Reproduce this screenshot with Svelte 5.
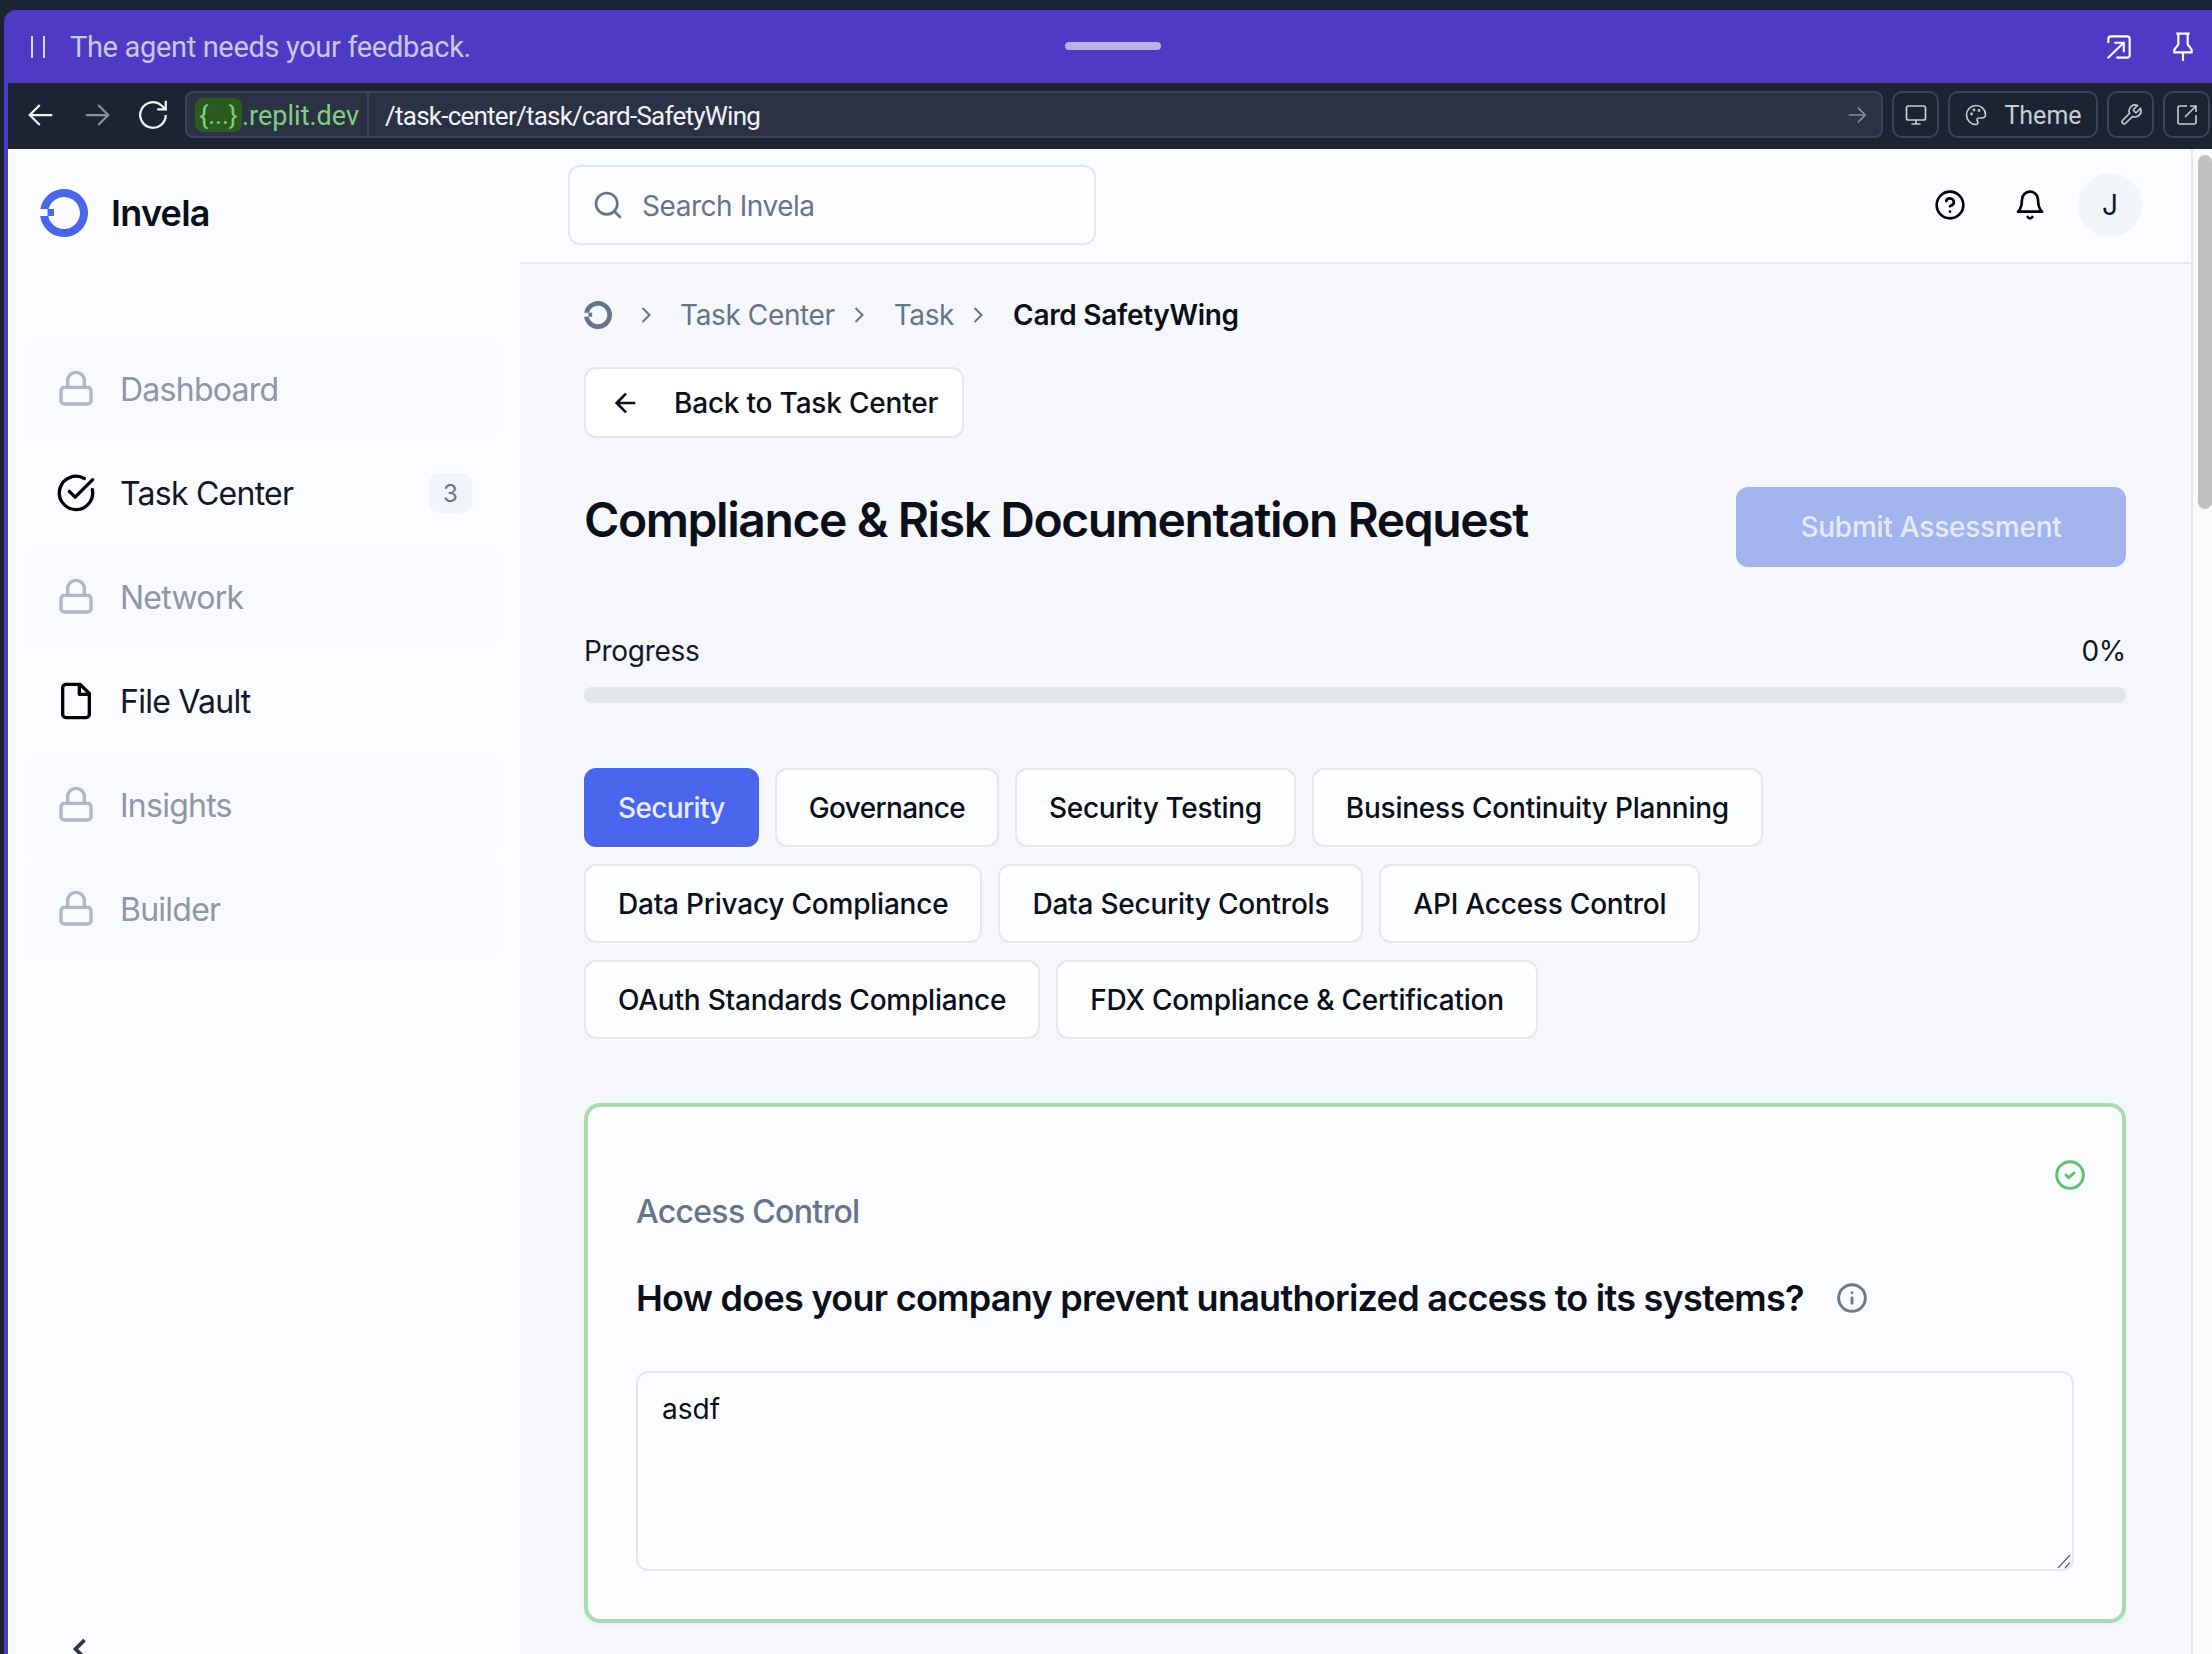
<script lang="ts">
  const navItems = [
    { label: 'Dashboard', icon: 'lock' },
    { label: 'Task Center', icon: 'check', badge: 3 },
    { label: 'Network', icon: 'lock' },
    { label: 'File Vault', icon: 'file' },
    { label: 'Insights', icon: 'lock' },
    { label: 'Builder', icon: 'lock' },
  ];

  const tabRows = [
    ['Security', 'Governance', 'Security Testing', 'Business Continuity Planning'],
    ['Data Privacy Compliance', 'Data Security Controls', 'API Access Control'],
    ['OAuth Standards Compliance', 'FDX Compliance & Certification'],
  ];

  let answer = $state('asdf');
</script>

{#snippet ring(cls: string)}
  <svg class={cls} viewBox="0 0 48 48" fill="currentColor">
    <path d="M.34 20A24 24 0 1 1 .19 27H8.280A16 16 0 1 0 8.500 20Z" />
    <rect x="7.500" y="20" width="6.500" height="7" />
  </svg>
{/snippet}

<div class="frame">
  <div class="window">
    <div class="banner">
      <span class="pause"></span>
      <span class="banner-text">The agent needs your feedback.</span>
      <span class="grabber"></span>
      <svg class="banner-icon first" viewBox="0 0 24 24" fill="none" stroke="currentColor" stroke-width="1.6">
        <path d="M4 9V6a2 2 0 0 1 2-2h12a2 2 0 0 1 2 2v12a2 2 0 0 1-2 2h-8" />
        <path d="M3.500 20.500 15.500 8.800M8.500 8.800h7.100V16" />
      </svg>
      <svg class="banner-icon" viewBox="0 0 24 24" fill="none" stroke="currentColor" stroke-width="1.6">
        <path d="M12 16v6.500M7 2h10M8.500 2v8l-3 4v2h13v-2l-3-4V2" />
      </svg>
    </div>

    <div class="addressbar">
      <div class="nav-arrows">
        <svg viewBox="0 0 24 24" fill="none" stroke="currentColor" stroke-width="1.8"><path d="M21 12H3M11 4l-8 8 8 8" /></svg>
        <svg class="dim" viewBox="0 0 24 24" fill="none" stroke="currentColor" stroke-width="1.8"><path d="M3 12h18M13 4l8 8-8 8" /></svg>
        <svg class="reload" viewBox="0 0 24 24" fill="none" stroke="currentColor" stroke-width="1.6"><path d="M21 12a9 9 0 1 1-3-6.700L21 8" /><path d="M21 2v6h-6" /></svg>
      </div>
      <div class="url">
        <span class="host"><span class="chip">&#123;...&#125;</span><span class="domain">.replit.dev</span></span>
        <span class="path">/task-center/task/card-SafetyWing</span>
        <svg class="go" viewBox="0 0 24 24" fill="none" stroke="currentColor" stroke-width="1.8"><path d="M3 12h18M13 4l8 8-8 8" /></svg>
      </div>
      <button class="tool square" aria-label="Screen">
        <svg viewBox="0 0 24 24" fill="none" stroke="currentColor" stroke-width="1.7"><rect x="2.500" y="3" width="19" height="14" rx="2" /><path d="M12 17v4M7.500 21h9" /></svg>
      </button>
      <button class="tool theme">
        <svg viewBox="0 0 24 24" fill="none" stroke="currentColor" stroke-width="1.6"><path d="M12 2.500a9.500 9.500 0 1 0 0 19c1.600 0 2-1 2-2s-1-1.600-1-2.800c0-1.100.9-1.700 2-1.700h2.500c2.300 0 4-1.500 4-3.500 0-5-4.300-9-9.500-9z" /><circle cx="7.500" cy="11" r=".6" /><circle cx="10" cy="7" r=".6" /><circle cx="15" cy="7.500" r=".6" /></svg>
        <span class="theme-label">Theme</span>
      </button>
      <button class="tool square" aria-label="Tools">
        <svg viewBox="0 0 24 24" fill="none" stroke="currentColor" stroke-width="1.6"><path d="M14.700 6.300a1 1 0 0 0 0 1.400l1.600 1.600a1 1 0 0 0 1.400 0l3.800-3.800a6 6 0 0 1-7.900 7.900l-6.900 6.900a2.100 2.100 0 0 1-3-3l6.900-6.900a6 6 0 0 1 7.900-7.900z" /></svg>
      </button>
      <button class="tool square" aria-label="Open">
        <svg viewBox="0 0 24 24" fill="none" stroke="currentColor" stroke-width="1.6"><path d="M12 3H5a2 2 0 0 0-2 2v14a2 2 0 0 0 2 2h14a2 2 0 0 0 2-2v-7" /><path d="M10 14 21 3M15 3h6v6" /></svg>
      </button>
    </div>

    <div class="app">
      <aside class="sidebar">
        <div class="brand">
          {@render ring('logo')}
          <span>Invela</span>
        </div>
        <nav class="nav">
          {#each navItems as item}
            <div class="nav-item" class:locked={item.icon === 'lock'}>
              {#if item.icon === 'lock'}
                <svg class="nav-icon" viewBox="0 0 24 24" fill="none" stroke="currentColor" stroke-width="2"><rect x="3" y="11" width="18" height="10" rx="2" /><path d="M7 11V7a5 5 0 0 1 10 0v4" /></svg>
              {:else if item.icon === 'check'}
                <svg class="nav-icon" viewBox="0 0 24 24" fill="none" stroke="currentColor" stroke-width="2" stroke-linecap="round" stroke-linejoin="round"><path d="M21.800 10A10 10 0 1 1 17 3.300" /><path d="m8 11 3.500 3.500L22 4" /></svg>
              {:else}
                <svg class="nav-icon" viewBox="0 0 24 24" fill="none" stroke="currentColor" stroke-width="2" stroke-linejoin="round"><path d="M14.500 2H6a2 2 0 0 0-2 2v16a2 2 0 0 0 2 2h12a2 2 0 0 0 2-2V7.500z" /><path d="M14 2v6h6" /></svg>
              {/if}
              <span class="nav-label">{item.label}</span>
              {#if item.badge}
                <span class="badge">{item.badge}</span>
              {/if}
            </div>
          {/each}
        </nav>
        <svg class="collapse" viewBox="0 0 24 24" fill="none" stroke="currentColor" stroke-width="2.500"><path d="m15 18-6-6 6-6" /></svg>
      </aside>

      <div class="content">
        <header class="topbar">
          <div class="search">
            <svg viewBox="0 0 24 24" fill="none" stroke="currentColor" stroke-width="2" stroke-linecap="round"><circle cx="11" cy="11" r="8" /><path d="m21 21-4.300-4.300" /></svg>
            <span>Search Invela</span>
          </div>
          <div class="top-actions">
            <svg viewBox="0 0 24 24" fill="none" stroke="currentColor" stroke-width="2" stroke-linecap="round"><circle cx="12" cy="12" r="10" /><path d="M9.100 9a3 3 0 0 1 5.800 1c0 2-3 3-3 3M12 17h.01" /></svg>
            <svg viewBox="0 0 24 24" fill="none" stroke="currentColor" stroke-width="2" stroke-linecap="round" stroke-linejoin="round"><path d="M6 8a6 6 0 0 1 12 0c0 7 3 9 3 9H3s3-2 3-9" /><path d="M10.300 21a1.900 1.900 0 0 0 3.400 0" /></svg>
            <span class="avatar">J</span>
          </div>
        </header>

        <div class="body-row">
          <main class="main">
            <div class="crumbs">
              {@render ring('crumb-home')}
              <svg class="chev first" viewBox="0 0 24 24" fill="none" stroke="currentColor" stroke-width="1.7"><path d="m9 18 6-6-6-6" /></svg>
              <span>Task Center</span>
              <svg class="chev" viewBox="0 0 24 24" fill="none" stroke="currentColor" stroke-width="1.7"><path d="m9 18 6-6-6-6" /></svg>
              <span>Task</span>
              <svg class="chev" viewBox="0 0 24 24" fill="none" stroke="currentColor" stroke-width="1.7"><path d="m9 18 6-6-6-6" /></svg>
              <span class="current">Card SafetyWing</span>
            </div>

            <button class="back">
              <svg viewBox="0 0 24 24" fill="none" stroke="currentColor" stroke-width="2"><path d="M19 12H5M12 19l-7-7 7-7" /></svg>
              Back to Task Center
            </button>

            <div class="title-row">
              <h1>Compliance &amp; Risk Documentation Request</h1>
              <button class="submit">Submit Assessment</button>
            </div>

            <div class="progress-labels"><span>Progress</span><span>0%</span></div>
            <div class="progress"></div>

            <div class="tabs">
              {#each tabRows as row, r}
                <div class="tab-row">
                  {#each row as tab, t}
                    <button class="tab" class:active={r === 0 && t === 0}>{tab}</button>
                  {/each}
                </div>
              {/each}
            </div>

            <section class="card">
              <svg class="done" viewBox="0 0 24 24" fill="none" stroke="currentColor" stroke-width="2.200" stroke-linecap="round" stroke-linejoin="round"><circle cx="12" cy="12" r="10" /><path d="m9 12 2 2 4-3.500" /></svg>
              <div class="section-name">Access Control</div>
              <div class="question">
                How does your company prevent unauthorized access to its systems?
                <svg viewBox="0 0 24 24" fill="none" stroke="currentColor" stroke-width="2.200" stroke-linecap="round"><circle cx="12" cy="12" r="10" /><path d="M12 16v-4M12 8h.01" /></svg>
              </div>
              <div class="answer">
                <textarea bind:value={answer}></textarea>
                <svg class="grip" viewBox="0 0 14 15" fill="none" stroke="#5c5f66" stroke-width="1.200"><path d="M1 14 13 1M8 14l5-5.500" /></svg>
              </div>
            </section>
          </main>
          <div class="scrollbar"><div class="thumb"></div></div>
        </div>
      </div>
    </div>
  </div>
</div>

<style>
  :global(body) {
    margin: 0;
    background: #1c2333;
    overflow: hidden;
  }
  .frame {
    height: 1654px;
    padding: 10px 0 0 4px;
    box-sizing: border-box;
    background: #1c2333;
    overflow: hidden;
    font-family: Inter, "Liberation Sans", sans-serif;
  }
  .window {
    height: 1644px;
    display: flex;
    flex-direction: column;
    background: #4e3ac5;
    border-top-left-radius: 12px;
  }
  .banner {
    height: 73px;
    flex: none;
    display: flex;
    align-items: center;
    padding: 0 13px 0 27px;
    color: #c9c7e2;
    font-family: Roboto, sans-serif;
    font-size: 29px;
    position: relative;
  }
  .banner-text {
    letter-spacing: -0.33px;
  }
  .pause {
    width: 14px;
    height: 22px;
    border-left: 2px solid #dcdaf0;
    border-right: 2px solid #dcdaf0;
    box-sizing: border-box;
    margin-right: 25px;
  }
  .grabber {
    position: absolute;
    left: 1061px;
    top: 32px;
    width: 96px;
    height: 8px;
    border-radius: 4px;
    background: #b9b3e4;
  }
  .banner-icon {
    width: 32px;
    height: 32px;
    color: #fff;
    flex: none;
    margin-left: 32px;
  }
  .banner-icon.first {
    margin-left: auto;
  }
  .addressbar {
    height: 66px;
    flex: none;
    margin-left: 4px;
    background: #1c2333;
    display: flex;
    align-items: center;
    gap: 9px;
    box-sizing: border-box;
    padding: 0 2px 3px 0;
    color: #f2f3f7;
  }
  .nav-arrows {
    width: 168px;
    display: flex;
    align-items: center;
    gap: 26px;
    padding-left: 18px;
    box-sizing: border-box;
    flex: none;
  }
  .nav-arrows svg {
    width: 30px;
    height: 30px;
  }
  .nav-arrows .dim {
    color: #8b8f9b;
  }
  .nav-arrows .reload {
    width: 34px;
    height: 34px;
    margin-left: -2px;
  }
  .url {
    flex: 1;
    height: 47px;
    display: flex;
    align-items: center;
    background: #2b3245;
    border: 2px solid #3c445c;
    border-radius: 8px;
    box-sizing: border-box;
    font-family: Roboto, sans-serif;
    font-size: 27px;
    min-width: 0;
  }
  .host {
    height: 100%;
    display: flex;
    align-items: center;
    padding: 0 8px;
    border-right: 2px solid #3c445c;
    color: #7fd17f;
  }
  .chip {
    width: 47px;
    height: 34px;
    line-height: 34px;
    text-align: center;
    background: #2a5a1d;
    border-radius: 8px;
    font-size: 26px;
  }
  .domain {
    padding-top: 2px;
  }
  .path {
    padding: 2px 0 0 16px;
    font-size: 26px;
    letter-spacing: -0.76px;
  }
  .go {
    width: 22px;
    height: 22px;
    margin-left: auto;
    margin-right: 13px;
    color: #8b8f9b;
  }
  .tool {
    height: 47px;
    background: transparent;
    border: 2px solid #3c445c;
    border-radius: 10px;
    color: #c9ccd4;
    box-sizing: border-box;
    display: flex;
    align-items: center;
    justify-content: center;
    padding: 0;
    flex: none;
    font-family: Roboto, sans-serif;
    font-size: 25px;
  }
  .tool svg {
    width: 24px;
    height: 24px;
  }
  .tool.square {
    width: 47px;
  }
  .theme {
    width: 150px;
    gap: 16px;
  }
  .theme-label {
    padding-top: 2px;
  }
  .app {
    flex: 1;
    min-height: 0;
    margin-left: 4px;
    display: flex;
    background: #fbfcff;
  }
  .sidebar {
    width: 512px;
    flex: none;
    position: relative;
    background: #fbfcff;
    padding: 0 16px;
    box-sizing: border-box;
  }
  .brand {
    height: 64px;
    margin: 0 0 0 16px;
    padding-top: 32px;
    display: flex;
    align-items: center;
    gap: 23px;
    font-size: 36px;
    font-weight: 600;
    color: #0b0f1a;
    letter-spacing: -0.75px;
  }
  .brand :global(.logo) {
    width: 48px;
    height: 48px;
    flex: none;
    color: #4965ec;
  }
  .nav {
    margin-top: 96px;
    display: flex;
    flex-direction: column;
    gap: 8px;
  }
  .nav-item {
    height: 96px;
    display: flex;
    align-items: center;
    gap: 24px;
    padding: 0 32px;
    border-radius: 16px;
    color: #111827;
    font-size: 32px;
    letter-spacing: -0.75px;
    box-sizing: border-box;
  }
  .nav-item.locked {
    background: #f8fafd;
    color: #8f96a5;
  }
  .nav-icon {
    width: 40px;
    height: 40px;
    flex: none;
    color: #000;
  }
  .locked .nav-icon {
    color: #aeb8c8;
  }
  .badge {
    margin-left: auto;
    width: 43px;
    height: 40px;
    border-radius: 10px;
    background: #f1f5f9;
    color: #64748b;
    font-size: 24px;
    letter-spacing: 0;
    display: flex;
    align-items: center;
    justify-content: center;
  }
  .collapse {
    position: absolute;
    left: 54px;
    bottom: -13px;
    width: 36px;
    height: 36px;
    color: #2f3542;
  }
  .content {
    flex: 1;
    min-width: 0;
    display: flex;
    flex-direction: column;
    background: #f5f7fb;
  }
  .topbar {
    height: 115px;
    flex: none;
    background: #fbfcff;
    border-bottom: 2px solid #e8eaef;
    box-sizing: border-box;
    display: flex;
    align-items: center;
    justify-content: space-between;
    padding: 0 70px 0 48px;
  }
  .search {
    width: 528px;
    height: 80px;
    border: 2px solid #e2e8f0;
    border-radius: 12px;
    box-sizing: border-box;
    display: flex;
    align-items: center;
    gap: 18px;
    padding: 0 22px;
    font-size: 28px;
    letter-spacing: -0.45px;
    color: #64748b;
    margin-top: -2px;
    background: #fdfdff;
  }
  .search span {
    padding-top: 3px;
  }
  .search svg {
    width: 32px;
    height: 32px;
    flex: none;
  }
  .top-actions {
    display: flex;
    align-items: center;
    gap: 48px;
    margin-top: -1px;
  }
  .top-actions svg {
    width: 32px;
    height: 32px;
    color: #000;
  }
  .avatar {
    width: 64px;
    height: 64px;
    margin-left: -16px;
    border-radius: 50%;
    background: #f1f5f9;
    display: flex;
    align-items: center;
    justify-content: center;
    font-size: 28px;
    color: #0f172a;
  }
  .body-row {
    flex: 1;
    min-height: 0;
    display: flex;
  }
  .main {
    flex: 1;
    min-width: 0;
    padding: 31px 65px 0 64px;
    box-sizing: border-box;
  }
  .crumbs {
    height: 40px;
    display: flex;
    align-items: center;
    font-size: 28px;
    letter-spacing: -0.38px;
    color: #64748b;
  }
  .crumbs :global(.crumb-home) {
    width: 28px;
    height: 28px;
  }
  .chev {
    width: 28px;
    height: 28px;
    margin: 0 21px 0 10px;
    color: #6b7280;
  }
  .chev.first {
    margin: 0 20px;
  }
  .current {
    color: #0b0f1a;
    font-weight: 600;
    letter-spacing: -0.3px;
  }
  .back {
    margin-top: 32px;
    width: 380px;
    height: 71px;
    background: #fff;
    border: 2px solid #e4e7ec;
    border-radius: 12px;
    box-sizing: border-box;
    display: flex;
    align-items: center;
    gap: 32px;
    padding: 0 0 0 24px;
    font-family: inherit;
    font-size: 28px;
    font-weight: 500;
    letter-spacing: -0.2px;
    color: #0b0f1a;
  }
  .back svg {
    width: 32px;
    height: 32px;
    flex: none;
  }
  .title-row {
    margin-top: 49px;
    height: 81px;
    display: flex;
    justify-content: space-between;
    align-items: flex-start;
  }
  h1 {
    margin: 0;
    font-size: 48px;
    font-weight: 600;
    line-height: 66px;
    color: #0b0f1a;
    letter-spacing: -1.42px;
  }
  .submit {
    width: 390px;
    height: 80px;
    background: #a3b4ef;
    color: #e6ebfb;
    border: 0;
    border-radius: 12px;
    font-family: inherit;
    font-size: 28px;
    font-weight: 500;
    letter-spacing: -0.25px;
  }
  .progress-labels {
    margin-top: 63px;
    display: flex;
    justify-content: space-between;
    font-size: 28px;
    letter-spacing: -0.3px;
    line-height: 40px;
    color: #0f172a;
  }
  .progress {
    margin-top: 16px;
    height: 16px;
    border-radius: 8px;
    background: #e3e6eb;
  }
  .tabs {
    margin-top: 65px;
    display: flex;
    flex-direction: column;
    gap: 17px;
  }
  .tab-row {
    display: flex;
    gap: 16px;
  }
  .tab {
    height: 79px;
    padding: 0 32px;
    background: #fcfdff;
    border: 2px solid #e4e7ec;
    border-radius: 12px;
    box-sizing: border-box;
    font-family: inherit;
    font-size: 28px;
    font-weight: 500;
    letter-spacing: -0.22px;
    color: #0b0f1a;
  }
  .tab-row:first-child .tab:nth-child(-n + 2) {
    letter-spacing: -0.65px;
  }
  .tab-row:first-child .tab:nth-child(3) {
    letter-spacing: -0.32px;
  }
  .tab.active {
    background: #4965ec;
    border-color: #4965ec;
    color: #e8ecfd;
  }
  .card {
    position: relative;
    margin-top: 64px;
    height: 520px;
    box-sizing: border-box;
    border: 4px solid #a8dcb0;
    border-radius: 16px;
    background: #fbfcff;
    padding: 83px 48px 0;
    box-shadow: 0 2px 4px rgba(0, 0, 0, 0.04);
  }
  .done {
    position: absolute;
    top: 52px;
    right: 36px;
    width: 32px;
    height: 32px;
    color: #5cc26f;
  }
  .section-name {
    font-size: 32px;
    line-height: 44px;
    color: #64748b;
    font-weight: 500;
    letter-spacing: -0.7px;
  }
  .question {
    margin-top: 42px;
    display: flex;
    align-items: center;
    gap: 32px;
    font-size: 36px;
    line-height: 44px;
    font-weight: 600;
    color: #0b0f1a;
    letter-spacing: -0.73px;
  }
  .question svg {
    width: 32px;
    height: 32px;
    color: #6b7a90;
    flex: none;
  }
  .answer {
    position: relative;
    margin-top: 51px;
  }
  textarea {
    display: block;
    width: 100%;
    height: 200px;
    box-sizing: border-box;
    border: 2px solid #e4e7ec;
    border-radius: 12px;
    background: #fbfcff;
    padding: 16px 24px;
    font-family: inherit;
    font-size: 28px;
    line-height: 40px;
    color: #0b0f1a;
    resize: none;
    outline: none;
  }
  .grip {
    position: absolute;
    right: 3px;
    bottom: 2px;
    width: 14px;
    height: 15px;
  }
  .scrollbar {
    width: 21px;
    flex: none;
    background: #fafafa;
    border-left: 2px solid #e8e8e8;
    box-sizing: border-box;
    margin-top: -115px;
    position: relative;
    z-index: 1;
  }
  .thumb {
    margin: 6px 0 0 5px;
    width: 14px;
    height: 354px;
    border-radius: 7px;
    background: #c1c1c1;
  }
</style>
